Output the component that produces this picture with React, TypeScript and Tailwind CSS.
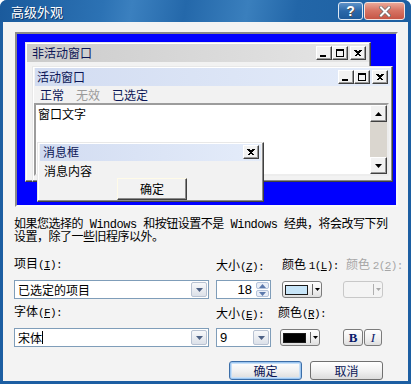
import type { ReactNode } from 'react'

// Latin bits in SimSun-ish half width
function M({ children }: { children: ReactNode }) {
  return <span className="font-['Liberation_Mono',monospace] text-[11px] tracking-[-0.6px]">{children}</span>
}

function Key({ k }: { k: string }) {
  return (
    <M>
      (<span className="underline">{k}</span>):
    </M>
  )
}

function Cap({ kind }: { kind: 'min' | 'max' | 'close' }) {
  return (
    <div className="w-[16px] h-[14px] bg-[#f2f2f2] border border-t-white border-l-white border-r-[#404040] border-b-[#404040] shadow-[inset_-1px_-1px_0_#9a9a9a] flex items-center justify-center">
      <svg width="10" height="9" viewBox="0 0 10 9" shapeRendering="crispEdges">
        {kind === 'min' && <rect x="1" y="6" width="6" height="2" fill="#000" />}
        {kind === 'max' && (
          <g fill="#000">
            <rect x="1" y="0" width="8" height="2" />
            <rect x="1" y="0" width="1" height="8" />
            <rect x="8" y="0" width="1" height="8" />
            <rect x="1" y="7" width="8" height="1" />
          </g>
        )}
        {kind === 'close' && (
          <path d="M1.5 1 L7.5 7.5 M2.5 1 L8.5 7.5 M7.5 1 L1.5 7.5 M8.5 1 L2.5 7.5" stroke="#000" strokeWidth="1" fill="none" />
        )}
      </svg>
    </div>
  )
}

function Arrow({ up, color = '#4d6185' }: { up?: boolean; color?: string }) {
  return (
    <svg width="7" height="4" viewBox="0 0 7 4">
      <path d={up ? 'M0 4 L3.5 0 L7 4 Z' : 'M0 0 L7 0 L3.5 4 Z'} fill={color} />
    </svg>
  )
}

function DropBtn() {
  return (
    <div className="w-[16px] m-px rounded-[2px] border border-[#b8c2d2] bg-[linear-gradient(#f7f8fa,#dce1e9)] flex items-center justify-center">
      <Arrow />
    </div>
  )
}

function ColorBtn({ swatch, disabled }: { swatch: string; disabled?: boolean }) {
  return (
    <div
      className={`w-[40px] h-[17px] rounded-[3px] border flex items-center pl-[2px] ${
        disabled ? 'border-[#c8c8c8] bg-[#f4f4f4]' : 'border-[#7b7b7b] bg-[linear-gradient(#ffffff,#efefef_60%,#dedede)]'
      }`}
    >
      <div className={`w-[23px] h-[10px] border ${disabled ? 'border-transparent' : 'border-[#1a1a1a]'} ${swatch}`} />
      <div className={`w-px h-[11px] ml-[4px] ${disabled ? 'bg-[#b0b0b0]' : 'bg-[#6a6a6a]'}`} />
      <div className="ml-[2px]">
        <svg width="5" height="3" viewBox="0 0 5 3">
          <path d="M0 0 L5 0 L2.5 3 Z" fill={disabled ? '#a8a8a8' : '#000'} />
        </svg>
      </div>
    </div>
  )
}

function Preview() {
  return (
    <div className="relative ml-[12px] mt-[10px] w-[383px] h-[175px] bg-[#0000ff] border-2 border-t-[#8a8a8a] border-l-[#8a8a8a] border-r-[#f8f8f8] border-b-[#f8f8f8]">
      {/* inactive window */}
      <div className="absolute left-[8px] top-[8px] w-[346px] h-[140px] bg-[#f2f2f2] border border-t-[#e8e8e8] border-l-[#e8e8e8] border-r-[#404040] border-b-[#404040] shadow-[inset_-1px_-1px_0_#8a8a8a,inset_1px_1px_0_#ffffff] p-[1px]">
        <div className="h-[18px] bg-[linear-gradient(90deg,#cbcbcb,#e6e6e6)] flex items-center pl-[5px] pr-[3px]">
          <span className="text-[#0b1656]">非活动窗口</span>
          <div className="ml-auto flex">
            <Cap kind="min" />
            <Cap kind="max" />
            <div className="ml-[2px]">
              <Cap kind="close" />
            </div>
          </div>
        </div>
      </div>

      {/* active window */}
      <div className="absolute left-[15px] top-[32px] w-[361px] h-[116px] bg-[#f2f2f2] border border-t-[#e8e8e8] border-l-[#e8e8e8] border-r-[#404040] border-b-[#404040] shadow-[inset_-1px_-1px_0_#8a8a8a,inset_1px_1px_0_#ffffff] p-[1px] flex flex-col">
        <div className="h-[18px] mx-px bg-[linear-gradient(90deg,#d2dcf1,#e4ecfa)] flex items-center pl-[2px] pr-[2px]">
          <span className="text-[#0b1656]">活动窗口</span>
          <div className="ml-auto flex">
            <Cap kind="min" />
            <Cap kind="max" />
            <div className="ml-[2px]">
              <Cap kind="close" />
            </div>
          </div>
        </div>
        <div className="h-[17px] flex items-center pl-[6px] text-[#0b1656]">
          <span>正常</span>
          <span className="ml-[12px] text-[#9a9a9a]">无效</span>
          <span className="ml-[12px]">已选定</span>
        </div>
        <div className="h-[73px] mr-[2px] bg-white border-2 border-t-[#9c9c9c] border-l-[#9c9c9c] border-r-[#ededed] border-b-[#ededed] flex">
          <div className="flex-1 pl-[2px] pt-[3px]">窗口文字</div>
          <div className="w-[17px] flex flex-col">
            <div className="h-[17px] bg-[#f2f2f2] border border-t-white border-l-white border-r-[#404040] border-b-[#404040] shadow-[inset_-1px_-1px_0_#9a9a9a] flex items-center justify-center">
              <Arrow up color="#000" />
            </div>
            <div className="flex-1 bg-[#dad6cf]" />
            <div className="h-[17px] bg-[#f2f2f2] border border-t-white border-l-white border-r-[#404040] border-b-[#404040] shadow-[inset_-1px_-1px_0_#9a9a9a] flex items-center justify-center">
              <Arrow color="#000" />
            </div>
          </div>
        </div>
      </div>

      {/* message box */}
      <div className="absolute left-[20px] top-[108px] w-[227px] h-[60px] bg-[#f2f2f2] border border-t-[#e8e8e8] border-l-[#e8e8e8] border-r-[#404040] border-b-[#404040] shadow-[inset_-1px_-1px_0_#8a8a8a,inset_1px_1px_0_#ffffff] p-[1px] flex flex-col">
        <div className="h-[17px] mx-px bg-[linear-gradient(90deg,#d2dcf1,#e4ecfa)] flex items-center pl-[3px] pr-[2px]">
          <span className="text-[#0b1656]">消息框</span>
          <div className="ml-auto">
            <Cap kind="close" />
          </div>
        </div>
        <div className="pl-[5px] pt-[4px]">消息内容</div>
        <div className="ml-[78px] mt-[1px] w-[70px] h-[23px] bg-[#f2f2f2] border border-t-[#fffbe8] border-l-[#fffbe8] border-r-[#404040] border-b-[#404040] shadow-[inset_-1px_-1px_0_#8a8a8a] flex items-center justify-center">
          确定
        </div>
      </div>
    </div>
  )
}

export default function App() {
  return (
    <div className="w-[411px] h-[384px] flex flex-col bg-[#1c5ea2] rounded-t-[7px] overflow-hidden font-['Noto_Sans_CJK_SC',sans-serif] text-[12px] leading-[12px] text-black">
      {/* title bar */}
      <div className="h-[22px] flex bg-[linear-gradient(100deg,#1a5a9c_0%,#2c72b4_25%,#3b80bf_32%,#2468aa_45%,#3a7fbd_60%,#2266a8_72%,#1d5fa1_100%)]">
        <span className="pl-[11px] pt-[5px] text-white text-[13px] leading-[13px] [text-shadow:1px_1px_0_#0d3566]">高级外观</span>
        <div className="ml-auto mr-[6px] mt-[2px] flex gap-px">
          <div className="w-[25px] h-[18px] rounded-[3px] border border-[#dfe8f3] bg-[linear-gradient(#5e92c8,#2a68a9_50%,#1e5b9b)] flex items-center justify-center text-white font-bold text-[14px] font-['Liberation_Sans',sans-serif] [text-shadow:1px_1px_0_#555]">
            ?
          </div>
          <div className="w-[41px] h-[18px] rounded-[3px] border border-[#f3e2de] bg-[linear-gradient(#eaa898,#d77565_45%,#c65545)] flex items-center justify-center">
            <svg width="12" height="11" viewBox="0 0 12 11">
              <path d="M2 1.5 L10 9.5 M10 1.5 L2 9.5" stroke="#6b6b6b" strokeWidth="3.4" strokeLinecap="square" />
              <path d="M2 1.5 L10 9.5 M10 1.5 L2 9.5" stroke="#ffffff" strokeWidth="2" strokeLinecap="square" />
            </svg>
          </div>
        </div>
      </div>

      {/* client area */}
      <div className="flex-1 mx-[3px] mb-[3px] bg-[#f3f3f3] flex flex-col">
        <Preview />

        <div className="ml-[11px] mt-[12px] whitespace-nowrap font-['Liberation_Mono','Noto_Sans_CJK_SC',monospace] tracking-[-0.5px] leading-[13px]">
          <div>如果您选择的 Windows 和按钮设置不是 Windows 经典，将会改写下列</div>
          <div>设置，除了一些旧程序以外。</div>
        </div>

        {/* row 1 labels */}
        <div className="ml-[11px] mt-[12px] flex whitespace-nowrap">
          <div className="w-[202px]">
            项目<Key k="I" />
          </div>
          <div className="w-[66px] mt-[2px]">
            大小<Key k="Z" />
          </div>
          <div className="w-[64px] mt-[1px]">
            颜色 <M>1</M>
            <Key k="L" />
          </div>
          <div className="mt-[1px] text-[#a6a6a6]">
            颜色 <M>2</M>
            <Key k="2" />
          </div>
        </div>

        {/* row 1 controls */}
        <div className="ml-[11px] mt-[7px] flex items-center">
          <div className="w-[195px] h-[19px] border border-[#7f9db9] bg-white flex">
            <div className="flex-1 pl-[3px] leading-[17px]">已选定的项目</div>
            <DropBtn />
          </div>
          <div className="ml-[7px] w-[55px] h-[19px] border border-[#7f9db9] bg-white flex">
            <div className="flex-1 text-right pr-[3px] leading-[17px] font-['Liberation_Sans',sans-serif] text-[13px]">18</div>
            <div className="w-[15px] flex flex-col gap-px p-px">
              <div className="flex-1 rounded-[2px] border border-[#b5c3da] bg-[#e9eef7] flex items-center justify-center">
                <Arrow up color="#5c79ac" />
              </div>
              <div className="flex-1 rounded-[2px] border border-[#b5c3da] bg-[#e9eef7] flex items-center justify-center">
                <Arrow color="#5c79ac" />
              </div>
            </div>
          </div>
          <div className="ml-[11px]">
            <ColorBtn swatch="bg-[#c7e5f8]" />
          </div>
          <div className="ml-[21px]">
            <ColorBtn swatch="bg-transparent" disabled />
          </div>
        </div>

        {/* row 2 labels */}
        <div className="ml-[11px] mt-[6px] flex whitespace-nowrap">
          <div className="w-[202px]">
            字体<Key k="F" />
          </div>
          <div className="w-[62px] mt-[2px]">
            大小<Key k="E" />
          </div>
          <div className="mt-[1px]">
            颜色<Key k="R" />
          </div>
        </div>

        {/* row 2 controls */}
        <div className="ml-[11px] mt-[7px] flex items-center">
          <div className="w-[195px] h-[19px] border border-[#7f9db9] bg-white flex">
            <div className="flex-1 pl-[3px] leading-[17px] flex items-center">
              宋体<span className="w-px h-[13px] bg-black" />
            </div>
            <DropBtn />
          </div>
          <div className="ml-[7px] w-[55px] h-[19px] border border-[#7f9db9] bg-white flex">
            <div className="flex-1 pl-[3px] leading-[17px] font-['Liberation_Sans',sans-serif] text-[13px]">9</div>
            <DropBtn />
          </div>
          <div className="ml-[9px]">
            <ColorBtn swatch="bg-black" />
          </div>
          <div className="ml-[23px] w-[20px] h-[17px] rounded-[3px] border border-[#7b7b7b] bg-[linear-gradient(#ffffff,#efefef_60%,#dedede)] flex items-center justify-center font-['Liberation_Serif',serif] font-bold text-[13px] text-[#0a1a6c]">
            B
          </div>
          <div className="ml-px w-[18px] h-[17px] rounded-[3px] border border-[#7b7b7b] bg-[linear-gradient(#ffffff,#efefef_60%,#dedede)] flex items-center justify-center font-['Liberation_Serif',serif] italic text-[13px] text-[#0a1a6c]">
            I
          </div>
        </div>

        {/* buttons */}
        <div className="ml-[226px] mt-[14px] flex">
          <div className="w-[73px] h-[19px] rounded-[3px] border border-[#3c6ea8] shadow-[inset_0_0_0_1px_#9cc6f0,inset_0_0_0_2px_#c8e0f8] bg-[linear-gradient(#ffffff,#f0f0f0_55%,#dcdcdc)] flex items-center justify-center text-[#0b1656]">
            确定
          </div>
          <div className="ml-[8px] w-[73px] h-[19px] rounded-[3px] border border-[#707070] bg-[linear-gradient(#ffffff,#f0f0f0_55%,#dcdcdc)] flex items-center justify-center text-[#0b1656]">
            取消
          </div>
        </div>
      </div>
    </div>
  )
}
